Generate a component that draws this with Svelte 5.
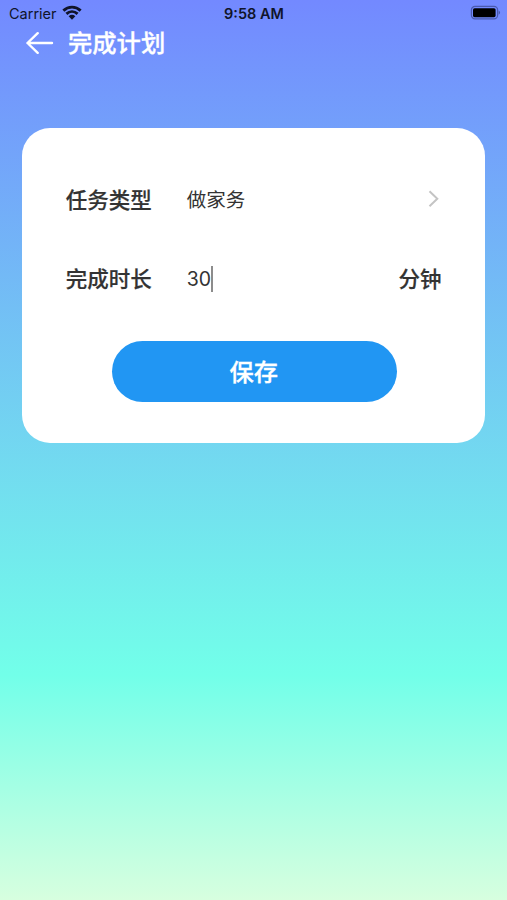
<script>
  let minutes = $state('30');
  const task = '做家务';
</script>

<main>
  <div class="status">
    <div class="carrier">
      <span>Carrier</span>
      <svg width="20" height="15" viewBox="0 0 19 14">
        <path d="M1.3 5.2C6 .8 13 .8 17.7 5.2" />
        <path d="M4.2 8.3C7.3 5.4 11.7 5.4 14.8 8.3" />
        <path class="dot" d="M6.3 10.5Q9.5 8 12.7 10.5L9.5 13.8Z" />
      </svg>
    </div>
    <span class="time">9:58 AM</span>
    <svg class="battery" width="32" height="16" viewBox="0 0 32 16">
      <rect x="1.4" y="1.4" width="26.2" height="12.4" rx="3.6" />
      <rect class="fill" x="3" y="3.2" width="22.6" height="9" rx="1.6" />
      <path d="M28.6 5.5Q31.6 7.6 28.6 9.7Z" />
    </svg>
  </div>

  <header>
    <svg width="28" height="24" viewBox="0 0 28 24">
      <path d="M11.7 2.2L1.5 12L11.7 21.8M1.5 12H26" />
    </svg>
    <h1>完成计划</h1>
  </header>

  <section class="card">
    <div class="row">
      <span class="label">任务类型</span>
      <span class="value">{task}</span>
      <svg width="12" height="18" viewBox="0 0 12 18"><path d="M1.5 1.2L9.3 8.7L1.5 16.2" /></svg>
    </div>
    <div class="row second">
      <span class="label">完成时长</span>
      <span class="value number">{minutes}<i class="caret"></i></span>
      <span class="unit">分钟</span>
    </div>
    <button>保存</button>
  </section>
</main>

<style>
  main {
    box-sizing: border-box;
    width: 507px;
    height: 900px;
    padding: 0 22px;
    overflow: hidden;
    background: linear-gradient(180deg, #7389ff 0%, #72ffe9 75%, #d7ffdf 100%);
    font-family: Inter, "Noto Sans CJK SC", sans-serif;
    color: #333;
  }
  svg { fill: none; display: block; }
  .status {
    box-sizing: border-box;
    height: 28px;
    margin: 0 -15px;
    padding-bottom: 1px;
    display: grid;
    grid-template-columns: 1fr auto 1fr;
    align-items: center;
    color: #10142a;
  }
  .carrier {
    display: flex;
    align-items: center;
    gap: 5px;
    padding-left: 2px;
    font-size: 14.5px;
  }
  .carrier svg { stroke: #10142a; stroke-width: 2.7; margin-top: -3px; }
  .carrier .dot { fill: #10142a; stroke: none; }
  .time { font-size: 14.5px; font-weight: 600; padding-left: 1px; }
  .battery { justify-self: end; margin: -1px -2px 0 0; fill: #4a5aae; }
  .battery rect { stroke: #4a5aae; stroke-width: 1.2; fill: none; }
  .battery .fill { fill: #000; stroke: none; }
  header {
    height: 30px;
    display: flex;
    align-items: center;
    gap: 14px;
    padding-left: 4px;
    color: #fff;
  }
  header svg { stroke: #fff; stroke-width: 2.4; stroke-linecap: round; stroke-linejoin: round; }
  h1 { margin: 0; font-size: 24.3px; line-height: 30px; font-weight: 500; -webkit-text-stroke: 0.3px #fff; }
  .card {
    box-sizing: border-box;
    width: 463px;
    height: 315.5px;
    margin: 69.7px 0 0 0.4px;
    padding: 52px 44px 0 43.3px;
    border-radius: 28px;
    background: #fff;
  }
  .row { height: 40px; display: flex; align-items: center; line-height: 40px; }
  .second { margin-top: 39px; }
  .label { width: 121px; font-size: 21.5px; font-weight: 500; -webkit-text-stroke: 0.2px #333; }
  .value { flex: 1; font-size: 19.5px; font-weight: 400; display: flex; align-items: center; }
  .row svg { stroke: #c4c4c4; stroke-width: 2; margin: -1px 1px 0 0; }
  .unit { font-size: 21.5px; font-weight: 500; -webkit-text-stroke: 0.2px #333; }
  .caret { width: 2px; height: 26px; margin-left: -0.5px; background: #8c8c8c; }
  button {
    display: block;
    width: 285px;
    height: 61px;
    margin: 42px 0 0 46px;
    padding: 0 1px 2px 0;
    border: 0;
    border-radius: 31px;
    background: #2196f3;
    color: #fff;
    font: 500 24.3px/59px "Noto Sans CJK SC", sans-serif;
    -webkit-text-stroke: 0.3px #fff;
  }
</style>
